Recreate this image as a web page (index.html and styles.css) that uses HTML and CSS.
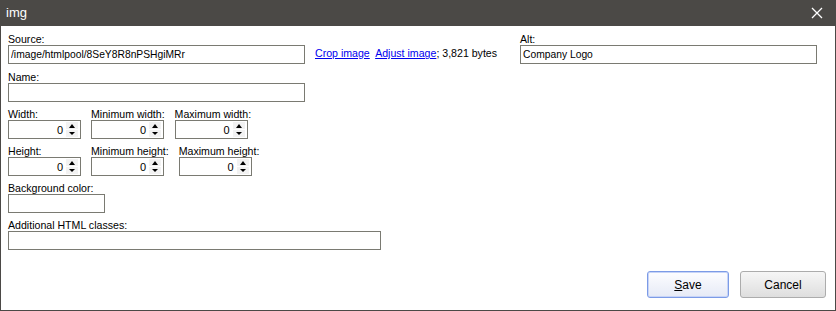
FILE: index.html
```html
<!DOCTYPE html>
<html lang="en">
<head>
    <meta charset="UTF-8">
    <title>img</title>
    <link rel="stylesheet" href="styles.css">
</head>
<body>
    <div class="window">
        <div class="titlebar">
            <span class="title">img</span>
            <span class="close">
                <svg width="12" height="12" viewBox="0 0 12 12"><path d="M1 1 L11 11 M11 1 L1 11" stroke="#fff" stroke-width="1.3"/></svg>
            </span>
        </div>

        <div class="content">
            <div class="row first">
                <div class="field source">
                    <label>Source:</label>
                    <input class="text" type="text" value="/image/htmlpool/8SeY8R8nPSHgiMRr">
                </div>
                <div class="links">
                    <a href="#">Crop image</a> <a href="#">Adjust image</a>; 3,821 bytes
                </div>
                <div class="field alt">
                    <label>Alt:</label>
                    <input class="text" type="text" value="Company Logo">
                </div>
            </div>

            <div class="field name">
                <label>Name:</label>
                <input class="text" type="text">
            </div>

            <div class="row spins">
                <div class="field"><label>Width:</label><div class="spin"><span class="num">0</span><span class="arrows"><i class="up"></i><i class="down"></i></span></div></div>
                <div class="field"><label>Minimum width:</label><div class="spin"><span class="num">0</span><span class="arrows"><i class="up"></i><i class="down"></i></span></div></div>
                <div class="field"><label>Maximum width:</label><div class="spin"><span class="num">0</span><span class="arrows"><i class="up"></i><i class="down"></i></span></div></div>
            </div>

            <div class="row spins">
                <div class="field"><label>Height:</label><div class="spin"><span class="num">0</span><span class="arrows"><i class="up"></i><i class="down"></i></span></div></div>
                <div class="field"><label>Minimum height:</label><div class="spin"><span class="num">0</span><span class="arrows"><i class="up"></i><i class="down"></i></span></div></div>
                <div class="field"><label>Maximum height:</label><div class="spin"><span class="num">0</span><span class="arrows"><i class="up"></i><i class="down"></i></span></div></div>
            </div>

            <div class="field bgcolor">
                <label>Background color:</label>
                <input class="text" type="text">
            </div>

            <div class="field classes">
                <label>Additional HTML classes:</label>
                <input class="text" type="text">
            </div>
        </div>

        <div class="buttons">
            <button class="btn default"><u>S</u>ave</button>
            <button class="btn">Cancel</button>
        </div>
    </div>
</body>
</html>
```

FILE: styles.css
```css
body {
    margin: 0;
    font-family: "Liberation Sans", Arial, sans-serif;
    font-size: 10.6px;
    color: #000;
    background: #fff;
}
.window {
    width: 834px;
    height: 310px;
    border: 1px solid #4b4946;
    border-top: none;
    display: flex;
    flex-direction: column;
}
.titlebar {
    flex-shrink: 0;
    height: 26px;
    background-color: #4b4946;
    color: #fff;
    display: flex;
    align-items: center;
    justify-content: space-between;
    margin: 0 -1px;
}
.title {
    font-size: 13px;
    padding-left: 6px;
    padding-bottom: 1px;
}
.close {
    display: flex;
    padding-right: 13px;
    padding-bottom: 1px;
}
.content {
    padding: 6px 0 0 7px;
    flex: 1;
}
.row {
    display: flex;
}
.field {
    display: flex;
    flex-direction: column;
    margin-bottom: 5px;
}
.first {
    margin-bottom: 1px;
}
label {
    line-height: 14px;
    height: 13px;
}
.text {
    box-sizing: border-box;
    height: 19px;
    border: 1px solid #7a7a72;
    font-family: inherit;
    font-size: 10.3px;
    padding: 0 2px;
    margin: 0;
    outline: none;
}
.source .text, .name .text {
    width: 297px;
}
.links {
    width: 215px;
    padding-left: 10px;
    padding-top: 15px;
    box-sizing: border-box;
    white-space: nowrap;
}
.links a {
    color: #0000ee;
    margin-right: 3px;
}
.links a + a {
    margin-right: 0;
}
.alt .text {
    width: 297px;
}
.spins {
    gap: 10px;
}
.spin {
    box-sizing: border-box;
    width: 73px;
    height: 19px;
    border: 1px solid #7a7a72;
    display: flex;
    align-items: center;
}
.num {
    flex: 1;
    text-align: right;
    padding-right: 3px;
    font-size: 11px;
}
.arrows {
    width: 12px;
    height: 15px;
    margin-right: 2px;
    display: flex;
    flex-direction: column;
    background: #f2f2f2;
}
.arrows i {
    flex: 1;
    display: flex;
    align-items: center;
    justify-content: center;
}
.up::before {
    content: "";
    border-left: 3px solid transparent;
    border-right: 3px solid transparent;
    border-bottom: 4px solid #000;
}
.down {
    border-top: 1px solid #fff;
}
.down::before {
    content: "";
    border-left: 3px solid transparent;
    border-right: 3px solid transparent;
    border-top: 3px solid #000;
}
.bgcolor .text {
    width: 97px;
}
.classes .text {
    width: 373px;
}
.buttons {
    display: flex;
    justify-content: flex-end;
    gap: 11px;
    padding: 0 9px 12px 0;
}
.btn {
    height: 27px;
    font-family: inherit;
    font-size: 12px;
    background: linear-gradient(#f6f6f6, #dedede);
    border: 1px solid #acacac;
    border-radius: 3px;
    width: 86px;
    padding: 0;
}
.default {
    width: 82px;
    border-color: #7c9be6;
    background: linear-gradient(#fdfdff, #e6eaf6);
    box-shadow: inset 0 0 0 1px #c7d4f7;
}
```
